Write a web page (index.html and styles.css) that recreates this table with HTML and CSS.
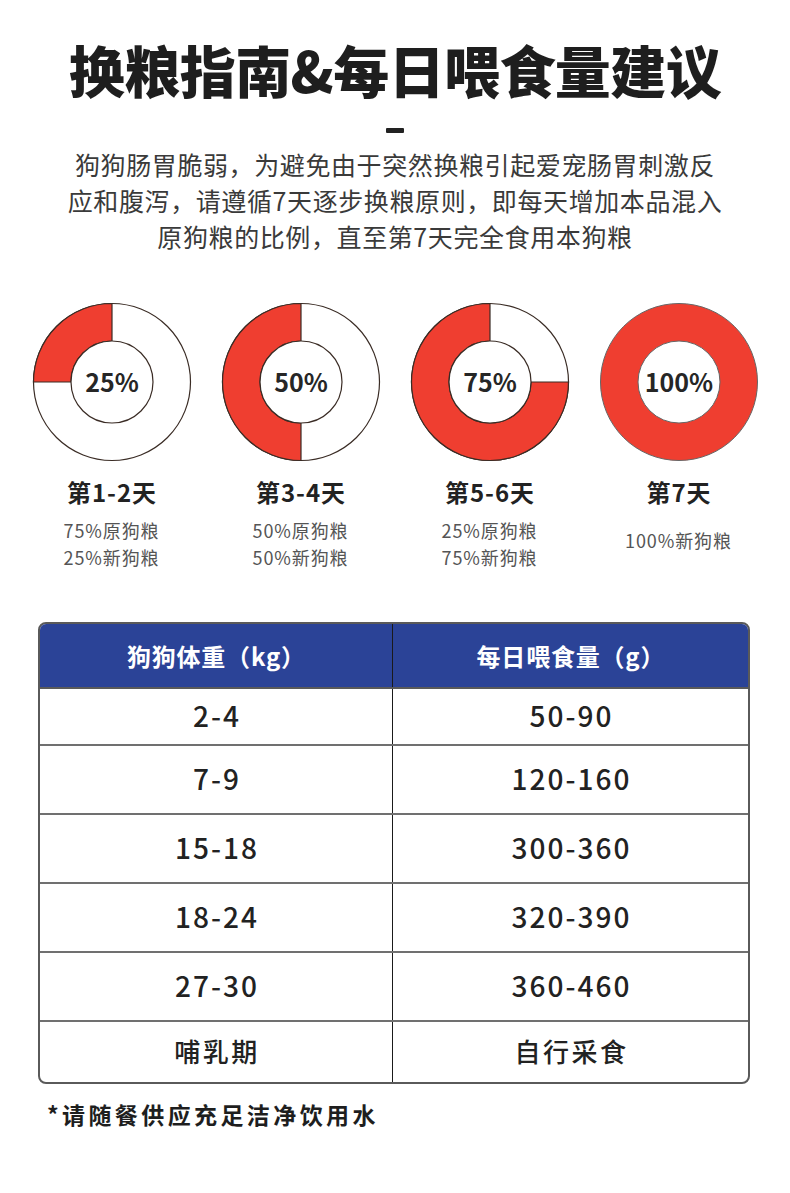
FILE: index.html
```html
<!DOCTYPE html>
<html lang="zh-CN">
<head>
<meta charset="utf-8">
<title>换粮指南&amp;每日喂食量建议</title>
<link rel="stylesheet" href="styles.css">
</head>
<body>
<div class="page">
  <h1 class="title">换粮指南&amp;每日喂食量建议</h1>
  <div class="dash"></div>
  <p class="intro">狗狗肠胃脆弱，为避免由于突然换粮引起爱宠肠胃刺激反<br>应和腹泻，请遵循7天逐步换粮原则，即每天增加本品混入<br>原狗粮的比例，直至第7天完全食用本狗粮</p>

  <div class="steps">
    <div class="step">
      <svg class="donut" width="160" height="160" viewBox="0 0 160 160">
        <circle cx="80" cy="80" r="78.5" fill="#fff" stroke="#3a2c25" stroke-width="1.2"/>
        <path d="M80,1.5 A78.5,78.5 0 0 0 1.5,80 L39,80 A41,41 0 0 1 80,39 Z" fill="#ef3e30" stroke="#3a2c25" stroke-width="1.2"/>
        <circle cx="80" cy="80" r="41" fill="#fff" stroke="#3a2c25" stroke-width="1.2"/>
        <text x="80" y="79" class="pct" text-anchor="middle" dominant-baseline="central">25%</text>
      </svg>
      <div class="label">第1-2天</div>
      <div class="sub">75%原狗粮<br>25%新狗粮</div>
    </div>
    <div class="step">
      <svg class="donut" width="160" height="160" viewBox="0 0 160 160">
        <circle cx="80" cy="80" r="78.5" fill="#fff" stroke="#3a2c25" stroke-width="1.2"/>
        <path d="M80,1.5 A78.5,78.5 0 0 0 80,158.5 L80,121 A41,41 0 0 1 80,39 Z" fill="#ef3e30" stroke="#3a2c25" stroke-width="1.2"/>
        <circle cx="80" cy="80" r="41" fill="#fff" stroke="#3a2c25" stroke-width="1.2"/>
        <text x="80" y="79" class="pct" text-anchor="middle" dominant-baseline="central">50%</text>
      </svg>
      <div class="label">第3-4天</div>
      <div class="sub">50%原狗粮<br>50%新狗粮</div>
    </div>
    <div class="step">
      <svg class="donut" width="160" height="160" viewBox="0 0 160 160">
        <circle cx="80" cy="80" r="78.5" fill="#fff" stroke="#3a2c25" stroke-width="1.2"/>
        <path d="M80,1.5 A78.5,78.5 0 1 0 158.5,80 L121,80 A41,41 0 1 1 80,39 Z" fill="#ef3e30" stroke="#3a2c25" stroke-width="1.2"/>
        <circle cx="80" cy="80" r="41" fill="#fff" stroke="#3a2c25" stroke-width="1.2"/>
        <text x="80" y="79" class="pct" text-anchor="middle" dominant-baseline="central">75%</text>
      </svg>
      <div class="label">第5-6天</div>
      <div class="sub">25%原狗粮<br>75%新狗粮</div>
    </div>
    <div class="step">
      <svg class="donut" width="160" height="160" viewBox="0 0 160 160">
        <circle cx="80" cy="80" r="78.5" fill="#ef3e30" stroke="#666" stroke-width="1"/>
        <circle cx="80" cy="80" r="41" fill="#fff" stroke="#666" stroke-width="1"/>
        <text x="80" y="79" class="pct" text-anchor="middle" dominant-baseline="central">100%</text>
      </svg>
      <div class="label">第7天</div>
      <div class="sub single">100%新狗粮</div>
    </div>
  </div>

  <div class="table">
    <div class="row head">
      <div class="cell">狗狗体重（kg）</div>
      <div class="cell">每日喂食量（g）</div>
    </div>
    <div class="row r1">
      <div class="cell">2-4</div>
      <div class="cell">50-90</div>
    </div>
    <div class="row rn">
      <div class="cell">7-9</div>
      <div class="cell">120-160</div>
    </div>
    <div class="row rn">
      <div class="cell">15-18</div>
      <div class="cell">300-360</div>
    </div>
    <div class="row rn">
      <div class="cell">18-24</div>
      <div class="cell">320-390</div>
    </div>
    <div class="row rn">
      <div class="cell">27-30</div>
      <div class="cell">360-460</div>
    </div>
    <div class="row rlast">
      <div class="cell">哺乳期</div>
      <div class="cell">自行采食</div>
    </div>
  </div>

  <p class="note">*请随餐供应充足洁净饮用水</p>
</div>
</body>
</html>
```
FILE: styles.css
```css
* { box-sizing: border-box; }
html, body { margin: 0; padding: 0; background: #fff; }
body {
  font-family: "Noto Sans CJK SC", "Noto Sans", sans-serif;
  color: #222;
}
.page {
  width: 790px;
  min-height: 1193px;
  padding-top: 36px;
}
.title {
  margin: 0;
  font-size: 56px;
  line-height: 66px;
  font-weight: 900;
  text-align: center;
  color: #1e1e1e;
  letter-spacing: -0.6px;
}
.dash {
  width: 18px;
  height: 5px;
  margin: 26px auto 0;
  background: #222;
  border-radius: 1px;
}
.intro {
  margin: 13px 0 0;
  font-size: 25px;
  line-height: 36px;
  letter-spacing: 0.6px;
  text-align: center;
  color: #3a3a3a;
  font-weight: 400;
}
.steps {
  margin-top: 48px;
  padding: 0 17px;
  display: grid;
  grid-template-columns: repeat(4, 1fr);
}
.step {
  display: flex;
  flex-direction: column;
  align-items: center;
}
.donut { display: block; }
.pct {
  font-family: "Noto Sans CJK SC", "Noto Sans", sans-serif;
  font-size: 25px;
  font-weight: 700;
  fill: #262626;
}
.label {
  margin-top: 15px;
  font-size: 24px;
  line-height: 30px;
  font-weight: 700;
  color: #222;
  letter-spacing: 1px;
  text-indent: 1px;
}
.sub {
  margin-top: 10px;
  height: 54px;
  font-size: 18px;
  line-height: 27px;
  color: #555;
  text-align: center;
  letter-spacing: 0.9px;
}
.sub.single { padding-top: 10px; }

.table {
  margin: 51px 40px 0 38px;
  border: 2px solid #5a5a5a;
  border-radius: 8px;
  overflow: hidden;
}
.row {
  display: grid;
  grid-template-columns: 353px 1fr;
}
.cell {
  display: flex;
  align-items: center;
  justify-content: center;
  font-size: 28px;
  font-weight: 500;
  letter-spacing: 2px;
  color: #222;
  text-indent: 2px;
  padding-bottom: 3px;
}
.cell:first-child { border-right: 1px solid #1a1a1a; }
.head {
  height: 65px;
  background: #2b4397;
  border-bottom: 2px solid #5a5a5a;
}
.head .cell {
  color: #fff;
  font-size: 24px;
  font-weight: 700;
  letter-spacing: 0.8px;
  text-indent: 0.8px;
  padding-bottom: 1px;
}
.r1 { height: 55px; }
.rn { height: 69px; border-top: 2px solid #707070; }
.rlast { height: 62px; border-top: 2px solid #707070; }
.rlast .cell { font-size: 26px; letter-spacing: 2.5px; }
.note {
  margin: 15px 0 0 47px;
  font-size: 23px;
  line-height: 30px;
  font-weight: 700;
  letter-spacing: 3.4px;
  color: #1e1e1e;
}
```
